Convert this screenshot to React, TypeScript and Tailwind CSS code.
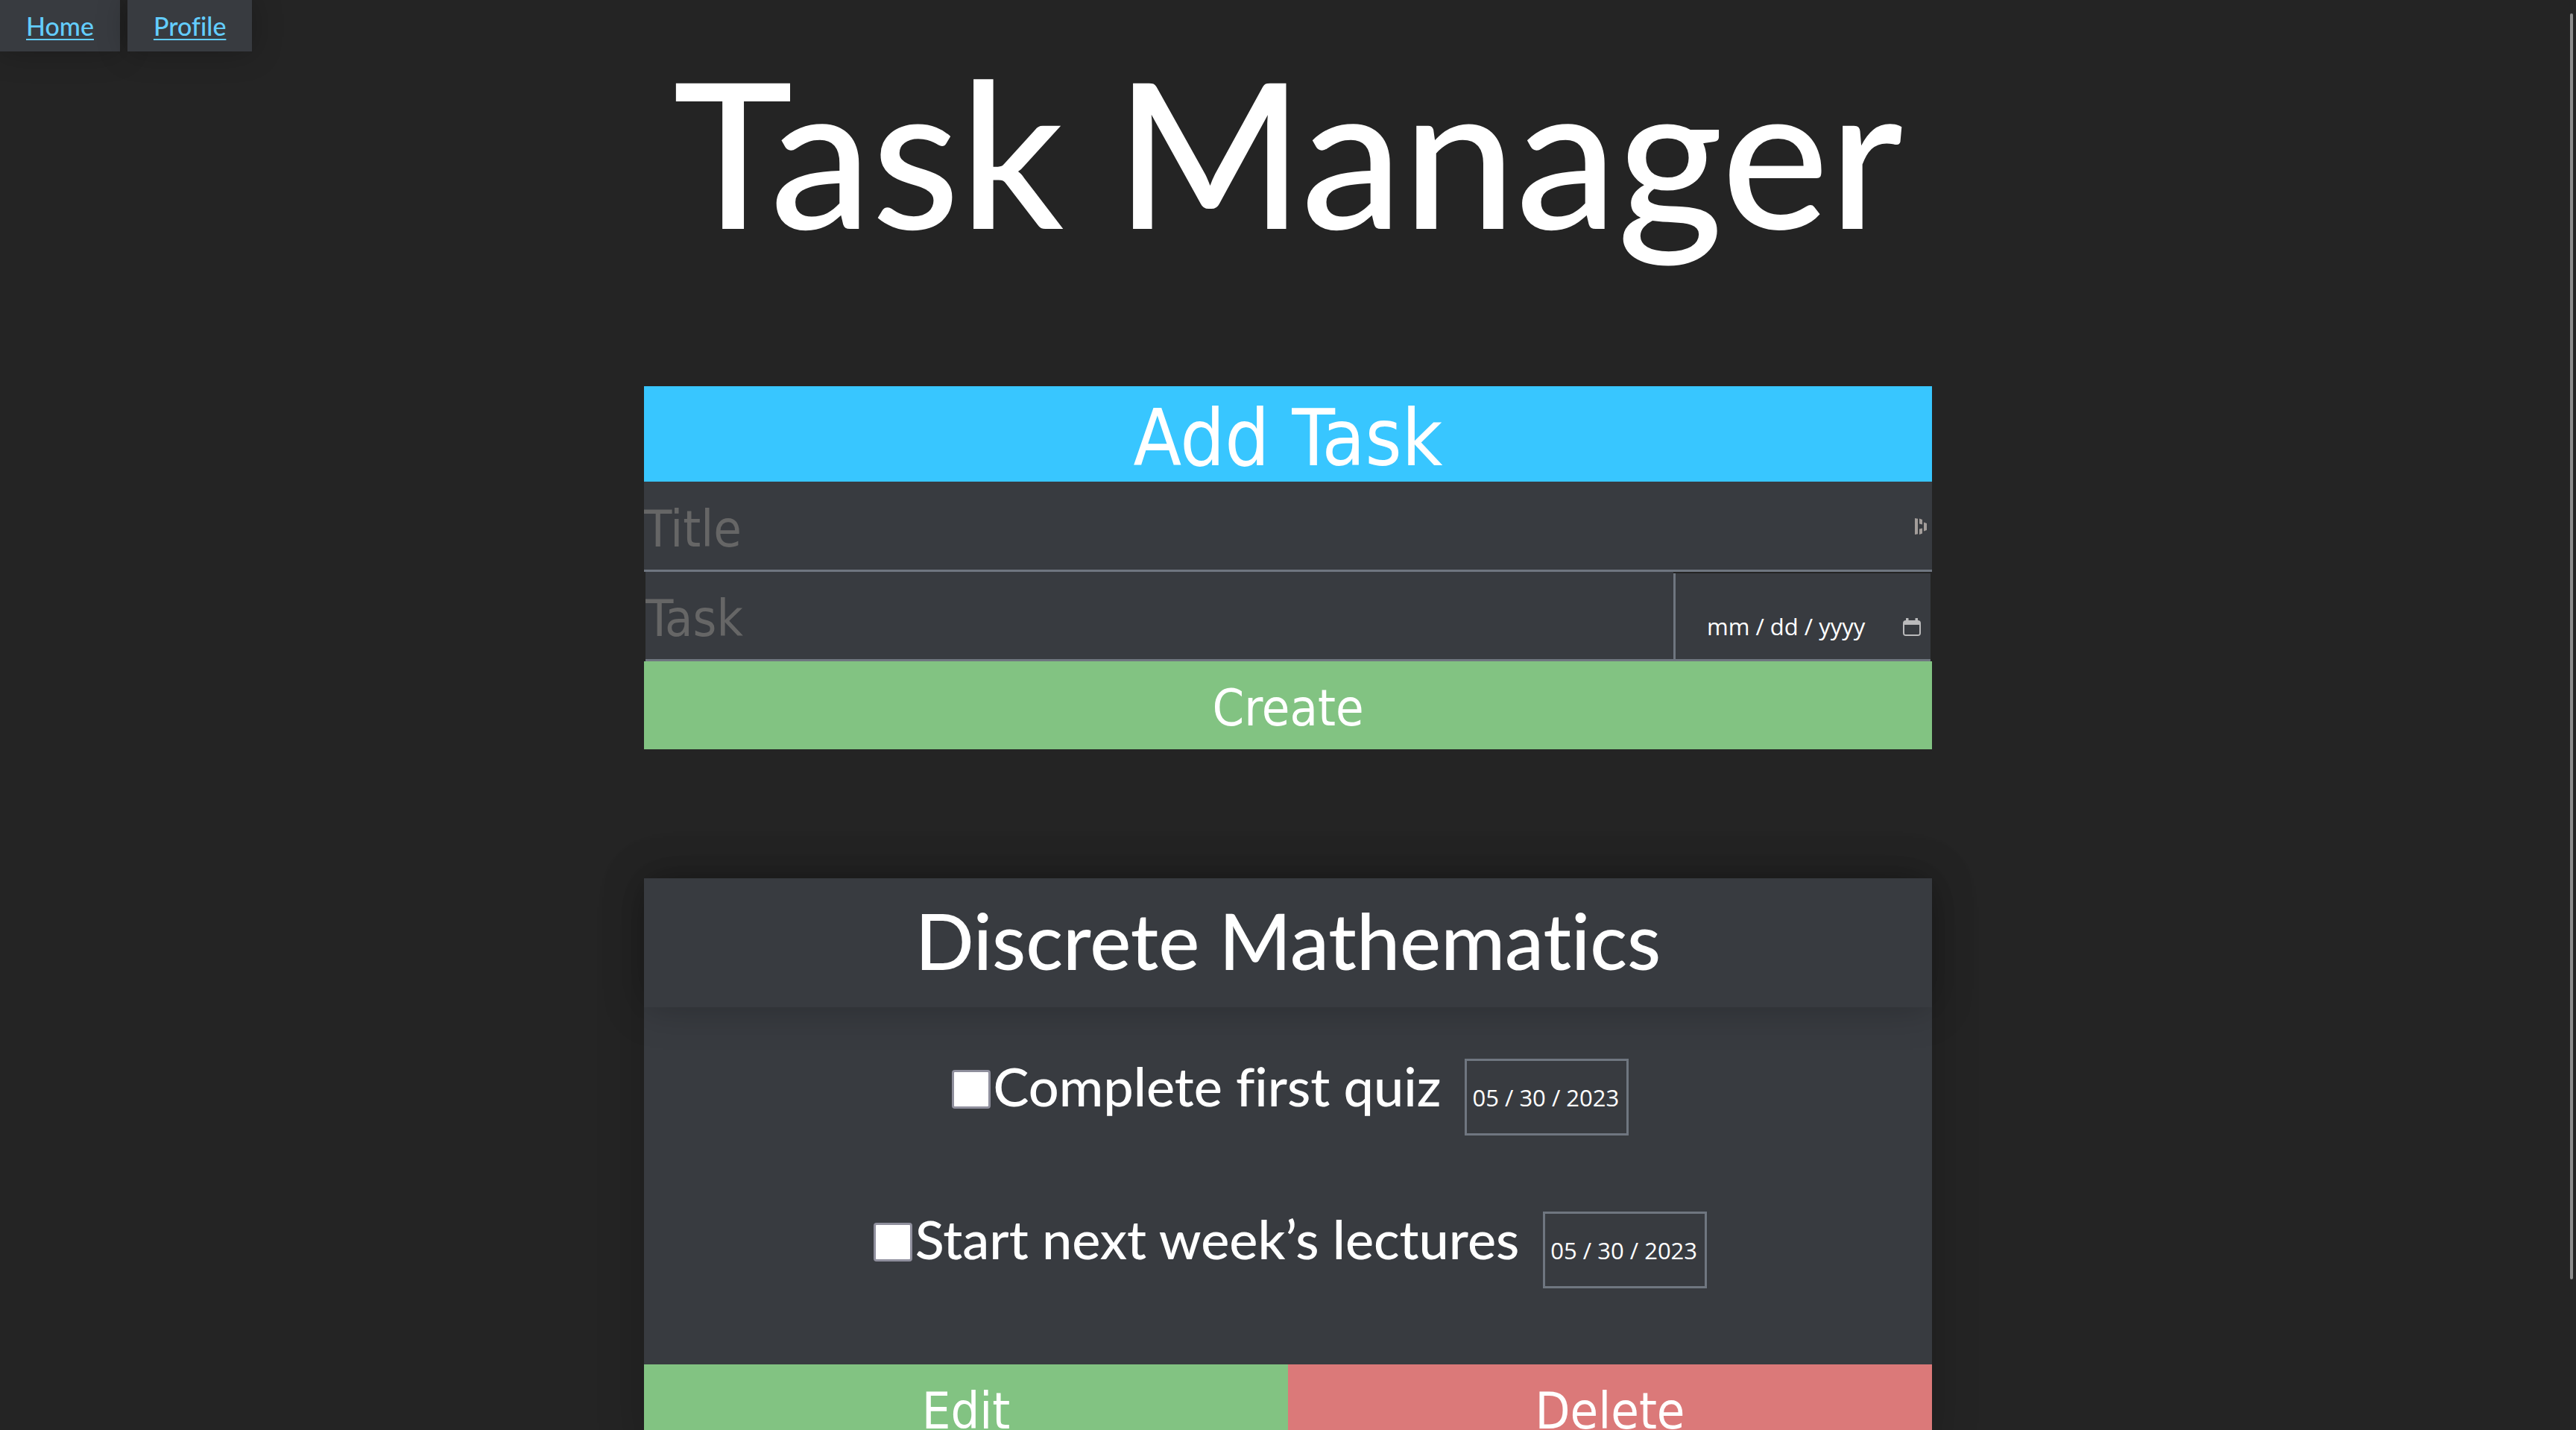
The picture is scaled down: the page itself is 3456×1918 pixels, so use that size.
import React from "react";

type Task = { id: string; text: string; due: string };

const tasks: Task[] = [
  { id: "quiz", text: "Complete first quiz", due: "05 / 30 / 2023" },
  { id: "lectures", text: "Start next week’s lectures", due: "05 / 30 / 2023" },
];

const navLinks = ["Home", "Profile"];

function NavBar() {
  return (
    <nav className="flex gap-2.5">
      {navLinks.map((name) => (
        <div
          key={name}
          className="flex h-[69px] items-center bg-[#383b40] px-[35px] shadow-[0_0_40px_rgba(0,0,0,0.25)]"
        >
          <a
            href="#"
            className="text-[34px] text-[#63cdff] underline decoration-2 underline-offset-4"
          >
            {name}
          </a>
        </div>
      ))}
    </nav>
  );
}

function PasswordManagerIcon() {
  return (
    <svg
      aria-hidden="true"
      viewBox="0 0 18 24"
      className="pointer-events-none absolute top-12 right-1.5 h-6 w-[18px] fill-[#a39d9a]"
    >
      <path d="M1 1l4 .8V22.200l-4 .8z" />
      <path d="M7 1.500l4 1.500v6.500l-4-1z" />
      <path d="M7 15.500l4-1v7l-4 1.500z" />
      <path d="M13 6.500l4 1.500v9l-4 1.500z" />
    </svg>
  );
}

function CalendarIcon() {
  return (
    <svg aria-hidden="true" viewBox="0 0 24 24" className="h-6 w-6 fill-[#bababb]">
      <path
        fillRule="evenodd"
        d="M4 1a1 1 0 0 1 3.500 0v2h9V1a1 1 0 0 1 3.500 0v2a4 4 0 0 1 4 4v13a4 4 0 0 1-4 4H4a4 4 0 0 1-4-4V7a4 4 0 0 1 4-4zM2 9v11.500a1.500 1.500 0 0 0 1.500 1.500h17a1.500 1.500 0 0 0 1.500-1.500V9z"
      />
    </svg>
  );
}

function AddTaskForm() {
  return (
    <form
      className="mt-[183px] font-['DejaVu_Sans_Condensed','DejaVu_Sans',sans-serif] font-normal"
      onSubmit={(e) => e.preventDefault()}
    >
      <h2 className="flex h-32 items-center justify-center bg-[#38c6ff] pt-3 text-[105px] leading-none">
        Add Task
      </h2>
      <div className="relative">
        <input
          type="text"
          aria-label="Title"
          placeholder="Title"
          className="block h-[121px] w-full border-b-[3px] border-[#6f7680] bg-[#383b40] pt-2 text-[68px] outline-none placeholder:text-[#666666]"
        />
        <PasswordManagerIcon />
      </div>
      <div className="flex h-[120px] px-0.5">
        <input
          type="text"
          aria-label="Task"
          placeholder="Task"
          className="min-w-0 flex-1 border-b-[3px] border-[#6f7680] bg-[#383b40] pt-2 text-[68px] outline-none placeholder:text-[#666666]"
        />
        <div className="mt-0.5 flex w-[345px] items-center border-b-[3px] border-l-[3px] border-[#6f7680] bg-[#383b40] pr-[13px] pl-[42px]">
          <input
            type="text"
            aria-label="Due date"
            placeholder="mm / dd / yyyy"
            className="min-w-0 flex-1 pt-7 font-['Open_Sans',sans-serif] text-[31px] font-medium outline-none placeholder:text-white"
          />
          <button type="button" aria-label="Open calendar" className="pt-7">
            <CalendarIcon />
          </button>
        </div>
      </div>
      <button
        type="submit"
        className="block h-[118px] w-full bg-[#82c382] pt-2 text-[68px] leading-none"
      >
        Create
      </button>
    </form>
  );
}

function TaskRow({ task }: { task: Task }) {
  return (
    <li className="flex items-start justify-center pl-1.5">
      <input
        id={task.id}
        type="checkbox"
        className="mt-[15px] h-[52px] w-[52px] appearance-none rounded-[4px] border-[3px] border-[#8f8f9d] bg-white checked:bg-[#38c6ff]"
      />
      <label htmlFor={task.id} className="ml-1 text-[72px] leading-[72px]">
        {task.text}
      </label>
      <input
        type="text"
        aria-label={`Due date of ${task.text}`}
        defaultValue={task.due}
        className="ml-8 h-[103px] w-[220px] border-[3px] border-[#6f7680] pl-[7px] font-['Open_Sans',sans-serif] text-[31px] font-medium outline-none"
      />
    </li>
  );
}

function TaskCard() {
  return (
    <section className="mt-[173px] bg-[#383b40] shadow-[0_0_60px_rgba(0,0,0,0.2)]">
      <h2 className="flex h-[173px] items-center justify-center pb-2 text-[104px] leading-none shadow-[0_0_50px_rgba(0,0,0,0.25)]">
        Discrete Mathematics
      </h2>
      <ul className="flex flex-col gap-[102px] pt-[69px] pb-[102px]">
        {tasks.map((task) => (
          <TaskRow key={task.id} task={task} />
        ))}
      </ul>
      <div className="grid grid-cols-2 font-['DejaVu_Sans_Condensed','DejaVu_Sans',sans-serif] text-[68px] leading-none font-normal">
        <button type="button" className="h-[118px] bg-[#82c382] pt-2">
          Edit
        </button>
        <button type="button" className="h-[118px] bg-[#db7979] pt-2">
          Delete
        </button>
      </div>
    </section>
  );
}

export default function App() {
  return (
    <div className="relative h-screen overflow-hidden bg-[#242424] font-['Lato',sans-serif] font-medium text-white [font-variant-ligatures:none]">
      <div className="h-full overflow-y-auto [scrollbar-width:none]">
        <NavBar />
        <h1 className="text-center text-[272px] leading-[266px]">Task Manager</h1>
        <main className="mx-auto w-1/2 pb-40">
          <AddTaskForm />
          <TaskCard />
        </main>
      </div>
      <div className="absolute top-[18px] right-1 h-[1698px] w-1 rounded-full bg-[#8c8c8c]" />
    </div>
  );
}
